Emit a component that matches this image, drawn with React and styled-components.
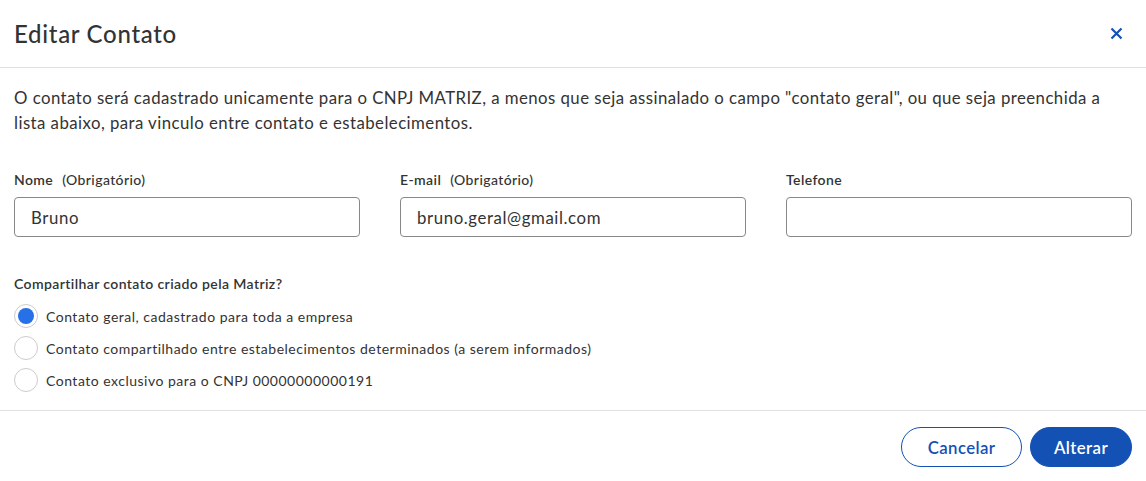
import React, { useState } from "react";
import styled, { createGlobalStyle } from "styled-components";

const Global = createGlobalStyle`
  html, body { margin: 0; padding: 0; background: #fff; }
  body { font-family: Lato, "Open Sans", sans-serif; color: #333; }
  * { box-sizing: border-box; }
`;

const Dialog = styled.div`
  width: 1146px;
  height: 481px;
  background: #fff;
  display: flex;
  flex-direction: column;
`;

const Header = styled.header`
  height: 68px;
  border-bottom: 1px solid #e0e0e0;
  display: flex;
  align-items: center;
  justify-content: space-between;
  padding: 0 18px 0 14px;
`;

const Title = styled.h1`
  margin: 0;
  font-size: 24px;
  font-weight: 500;
  letter-spacing: 0.7px;
  color: #333;
`;

const CloseButton = styled.button`
  width: 24px;
  height: 24px;
  border: 0;
  background: transparent;
  padding: 0;
  display: flex;
  align-items: center;
  justify-content: center;
  color: #1351b4;
  cursor: pointer;
`;

const Body = styled.div`
  padding: 17px 14px 0 14px;
  flex: 1;
`;

const Intro = styled.p`
  margin: 0;
  font-size: 16.8px;
  line-height: 25px;
  letter-spacing: 0.45px;
  color: #333;
`;

const FieldGrid = styled.div`
  display: grid;
  grid-template-columns: repeat(3, 1fr);
  column-gap: 40px;
  margin-top: 34px;
`;

const Field = styled.div`
  display: flex;
  flex-direction: column;
  gap: 7px;
`;

const Label = styled.label`
  font-size: 14px;
  line-height: 21px;
  font-weight: 600;
  letter-spacing: 0.4px;
  color: #333;
`;

const Hint = styled.span`
  font-weight: 500;
  margin-left: 9px;
`;

const Input = styled.input`
  height: 40px;
  width: 100%;
  border: 1px solid #888;
  border-radius: 4px;
  padding: 0 16px;
  font-family: inherit;
  font-size: 16.8px;
  letter-spacing: 0.6px;
  color: #333;
  background: #fff;
  outline: none;
`;

const Group = styled.fieldset`
  border: 0;
  margin: 36px 0 0 0;
  padding: 0;
`;

const Legend = styled.legend`
  padding: 0;
  font-size: 14px;
  line-height: 21px;
  font-weight: 600;
  letter-spacing: 0.4px;
  color: #333;
`;

const Options = styled.div`
  display: flex;
  flex-direction: column;
  gap: 8px;
  margin-top: 10px;
`;

const Option = styled.label`
  display: flex;
  align-items: center;
  gap: 8px;
  height: 24px;
  font-size: 14px;
  letter-spacing: 0.5px;
  color: #333;
  cursor: pointer;
`;

const RadioCircle = styled.span`
  width: 24px;
  height: 24px;
  border-radius: 50%;
  border: 1px solid #ccc;
  background: #fff;
  display: flex;
  align-items: center;
  justify-content: center;
  flex-shrink: 0;
  &::after {
    content: "";
    width: 16px;
    height: 16px;
    border-radius: 50%;
    background: ${(p) => (p.$checked ? "#2670e8" : "transparent")};
  }
`;

const HiddenRadio = styled.input`
  display: none;
`;

const Footer = styled.footer`
  border-top: 1px solid #e0e0e0;
  height: 71px;
  display: flex;
  justify-content: flex-end;
  align-items: flex-start;
  gap: 8px;
  padding: 16px 14px 0 14px;
`;

const Button = styled.button`
  height: 40px;
  border-radius: 20px;
  padding: 0 ${(p) => (p.$primary ? "23px" : "25.5px")};
  font-family: inherit;
  font-size: 16.8px;
  font-weight: 600;
  letter-spacing: 0.4px;
  cursor: pointer;
  border: 1px solid #1351b4;
  background: ${(p) => (p.$primary ? "#1351b4" : "#fff")};
  color: ${(p) => (p.$primary ? "#fff" : "#1351b4")};
`;

const options = [
  "Contato geral, cadastrado para toda a empresa",
  "Contato compartilhado entre estabelecimentos determinados (a serem informados)",
  "Contato exclusivo para o CNPJ 00000000000191",
];

export default function App() {
  const [sel, setSel] = useState(0);
  return (
    <Dialog>
      <Global />
      <Header>
        <Title>Editar Contato</Title>
        <CloseButton aria-label="Fechar">
          <svg width="13" height="13" viewBox="0 0 13 13">
            <path d="M1.5 1.5 L11.5 11.5 M11.5 1.5 L1.5 11.5" stroke="currentColor" strokeWidth="2.2" strokeLinecap="butt" />
          </svg>
        </CloseButton>
      </Header>
      <Body>
        <Intro>
          O contato será cadastrado unicamente para o CNPJ MATRIZ, a menos que seja assinalado o campo "contato geral", ou que seja preenchida a lista abaixo, para vinculo entre contato e estabelecimentos.
        </Intro>
        <FieldGrid>
          <Field>
            <Label>Nome<Hint>(Obrigatório)</Hint></Label>
            <Input defaultValue="Bruno" />
          </Field>
          <Field>
            <Label>E-mail<Hint>(Obrigatório)</Hint></Label>
            <Input defaultValue="bruno.geral@gmail.com" />
          </Field>
          <Field>
            <Label>Telefone</Label>
            <Input defaultValue="" />
          </Field>
        </FieldGrid>
        <Group>
          <Legend>Compartilhar contato criado pela Matriz?</Legend>
          <Options>
            {options.map((o, i) => (
              <Option key={i}>
                <HiddenRadio type="radio" name="share" checked={sel === i} onChange={() => setSel(i)} />
                <RadioCircle $checked={sel === i} />
                {o}
              </Option>
            ))}
          </Options>
        </Group>
      </Body>
      <Footer>
        <Button>Cancelar</Button>
        <Button $primary>Alterar</Button>
      </Footer>
    </Dialog>
  );
}
